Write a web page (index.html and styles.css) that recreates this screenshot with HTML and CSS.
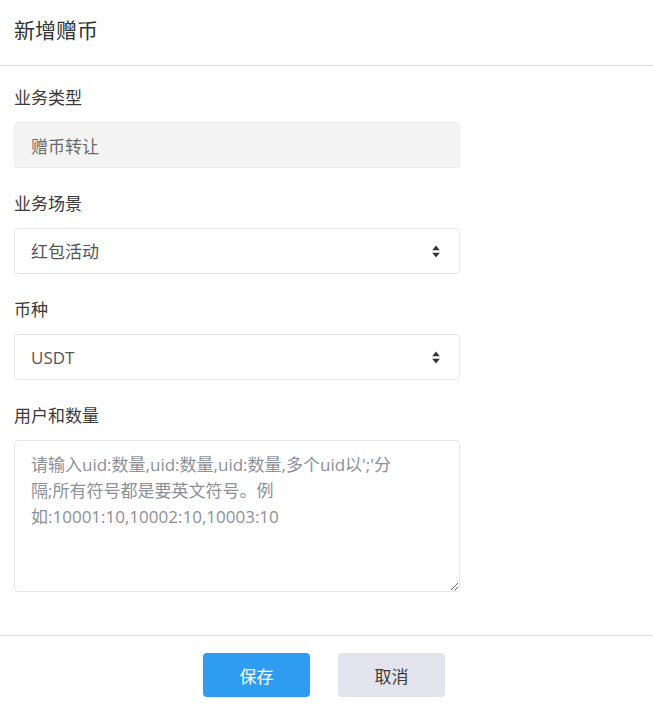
FILE: index.html
```html
<!DOCTYPE html>
<html lang="zh-CN">
<head>
  <meta charset="UTF-8" />
  <meta name="viewport" content="width=device-width, initial-scale=1" />
  <title>新增赠币</title>
  <link rel="stylesheet" href="styles.css">
</head>
<body>

  <div class="modal">
    <div class="modal-header">
      <h3>新增赠币</h3>
    </div>

    <div class="modal-body">
      <div class="form-group">
        <label>业务类型</label>
        <input class="form-control" type="text" value="赠币转让" disabled>
      </div>

      <div class="form-group">
        <label>业务场景</label>
        <div class="select-wrap">
          <select class="form-control">
            <option>红包活动</option>
          </select>
          <svg class="select-arrow" width="8" height="13" viewBox="0 0 8 13">
            <path d="M4 0.5 L7.8 5.3 L0.2 5.3 Z" fill="#333" />
            <path d="M4 12.5 L7.8 7.7 L0.2 7.7 Z" fill="#333" />
          </svg>
        </div>
      </div>

      <div class="form-group">
        <label>币种</label>
        <div class="select-wrap">
          <select class="form-control">
            <option>USDT</option>
          </select>
          <svg class="select-arrow" width="8" height="13" viewBox="0 0 8 13">
            <path d="M4 0.5 L7.8 5.3 L0.2 5.3 Z" fill="#333" />
            <path d="M4 12.5 L7.8 7.7 L0.2 7.7 Z" fill="#333" />
          </svg>
        </div>
      </div>

      <div class="form-group last">
        <label>用户和数量</label>
        <textarea class="form-control" placeholder="请输入uid:数量,uid:数量,uid:数量,多个uid以';'分&#10;隔;所有符号都是要英文符号。例&#10;如:10001:10,10002:10,10003:10"></textarea>
      </div>
    </div>

    <div class="modal-footer">
      <button class="btn btn-primary">保存</button>
      <button class="btn btn-default">取消</button>
    </div>
  </div>

</body>
</html>
```

FILE: styles.css
```css
body {
  margin: 0;
  padding: 0;
  background-color: #fff;
  color: #333;
  font-family: "Open Sans", "Noto Sans CJK SC", sans-serif;
}
.modal {
  width: 653px;
  height: 712px;
  display: flex;
  flex-direction: column;
}
.modal-header {
  height: 66px;
  border-bottom: 1px solid #dcdcdc;
  box-sizing: border-box;
  padding: 0 14px;
  display: flex;
  align-items: center;
}
.modal-header h3 {
  margin: 0 0 8px 0;
  font-size: 21px;
  font-weight: normal;
  color: #333;
}
.modal-body {
  padding: 21px 14px 43px 14px;
}
.form-group {
  width: 446px;
  margin-bottom: 25px;
}
.form-group.last {
  margin-bottom: 0;
}
.form-group label {
  display: block;
  font-size: 17px;
  line-height: 22px;
  color: #3a3a3a;
  margin-bottom: 13px;
}
.form-control {
  display: block;
  width: 100%;
  height: 46px;
  box-sizing: border-box;
  padding: 0 16px;
  border: 1px solid #e6e6e6;
  border-radius: 4px;
  background-color: #fff;
  color: #555;
  font-family: "Open Sans", "Noto Sans CJK SC", sans-serif;
  font-size: 17px;
  outline: none;
}
input.form-control:disabled {
  background-color: #f4f4f4;
  border-color: #ececec;
  color: #6a6a6a;
}
.select-wrap {
  position: relative;
}
select.form-control {
  -webkit-appearance: none;
  appearance: none;
}
.select-arrow {
  position: absolute;
  right: 20px;
  top: 17px;
  pointer-events: none;
}
textarea.form-control {
  height: 152px;
  padding: 11px 16px;
  font-size: 17px;
  line-height: 26px;
  resize: vertical;
}
textarea.form-control::placeholder {
  color: #8b9099;
}
.modal-footer {
  border-top: 1px solid #dcdcdc;
  padding: 17px 5px 14px 0;
  display: flex;
  justify-content: center;
  gap: 28px;
}
.btn {
  width: 107px;
  height: 44px;
  border: none;
  border-radius: 4px;
  font-family: "Open Sans", "Noto Sans CJK SC", sans-serif;
  font-size: 17px;
  cursor: pointer;
}
.btn-primary {
  background: #2e9cf0;
  color: #fff;
}
.btn-default {
  background: #e4e4ee;
  color: #3a3a3a;
}
```
